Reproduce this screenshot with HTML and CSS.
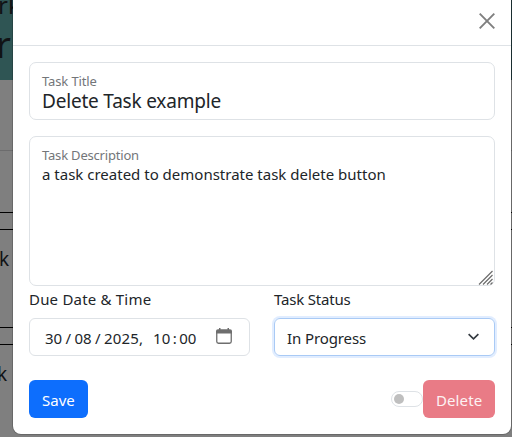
FILE: index.html
```html
<!DOCTYPE html>
<html lang="en">
<head>
<meta charset="utf-8">
<title>Edit task</title>
<link rel="stylesheet" href="styles.css">
</head>
<body>
<div class="page">
  <header class="hero"><span class="hero-sub">rk</span><span class="hero-title">r</span></header>
  <div class="toolbar"></div>
  <div class="gap"></div>
  <div class="task"></div>
  <div class="task task-row">k</div>
  <div class="task"></div>
  <div class="task-last">k</div>
</div>
<main class="modal">
  <div class="modal-header">
    <svg class="close" viewBox="0 0 16 16"><path d="M.7.7l14.6 14.6M15.3.7L.7 15.3"/></svg>
  </div>
  <form class="modal-body">
    <div class="field title-field">
      <span class="caption cap-title">Task Title</span>
      <span class="title-value">Delete Task example</span>
    </div>
    <div class="field desc-field">
      <span class="caption cap-desc">Task Description</span>
      <span class="desc-value">a task created to demonstrate task delete button</span>
      <svg class="grip" viewBox="0 0 15 15"><path d="M1 14.500L14.500 1M5 14.500L14.500 5M9 14.500L14.500 9M12.500 14.500L14.500 12.500"/></svg>
    </div>
    <div class="columns">
      <div>
        <div class="label due-label">Due Date &amp; Time</div>
        <div class="control date">
          <span class="num">30</span><span class="slash">/</span><span class="num">08</span><span class="slash">/</span><span class="year">2025</span><span class="comma">,</span><span class="num">10</span><span class="colon">:</span><span class="num">00</span>
          <svg class="calendar" viewBox="0 0 16 16"><path class="cal-box" d="M.75 4.500V13.500Q.75 15.250 2.500 15.250H13.500Q15.250 15.250 15.250 13.500V4.500"/><path class="cal-top" d="M0 5.500V3Q0 1.300 2 1.300H3V0H4.500V1.300H11.500V0H13V1.300H14Q16 1.300 16 3V5.500Z"/></svg>
        </div>
      </div>
      <div>
        <div class="label status-label">Task Status</div>
        <div class="control select"><span>In Progress</span><svg class="chevron" viewBox="0 0 16 16"><path d="m2 5 6 6 6-6"/></svg></div>
      </div>
    </div>
    <div class="actions">
      <div class="btn save"><span>Save</span></div>
      <div class="switch"><i></i></div>
      <div class="btn delete"><span>Delete</span></div>
    </div>
  </form>
</main>
</body>
</html>
```
FILE: styles.css
```css
* { box-sizing: border-box; }
body { margin: 0; width: 512px; height: 437px; overflow: hidden; position: relative; background: #7f7f7f; color: #212529; font: 16px/24px "Noto Sans", "Open Sans", sans-serif; }
.page { height: 437px; overflow: hidden; color: #111315; }
.hero { height: 80px; background: linear-gradient(90deg, #2f5554 90%, #1f373a); overflow: hidden; }
.hero span { display: block; }
.hero-sub { font-size: 24px; line-height: 24px; margin: -7px 0 0 -2px; }
.hero-title { font-size: 36px; line-height: 44px; margin: 6px 0 0 -4px; }
.toolbar { height: 71px; border-bottom: 1px solid #6c6c6d; }
.gap { height: 61px; }
.task { height: 18px; border-top: 1px solid #000; border-bottom: 1px solid #000; }
.task-row { height: 97px; border: 0; padding-top: 17px; font-size: 19px; margin-left: -1px; }
.task-last { padding-top: 17px; font-size: 19px; margin-left: -3px; }
.modal { position: absolute; left: 13px; top: 0; width: 498px; height: 434px; background: #fff; border-radius: 0 0 8px 8px; box-shadow: 0 0 0 1px rgba(0, 0, 0, .18); }
.modal-header { height: 46px; border-bottom: 1px solid #dee2e6; padding: 13px 16px 0 0; display: flex; justify-content: flex-end; }
.close { width: 16px; height: 16px; fill: none; stroke: #7f7f7f; stroke-width: 1.9; }
.modal-body { padding: 16px; margin: 0; white-space: nowrap; }
.field { border: 1px solid #dee2e6; border-radius: 7px; padding-left: 12px; position: relative; }
.field span { display: block; }
.title-field { height: 58px; padding-top: 9px; }
.caption { font-size: 13px; line-height: 18px; color: #737679; }
.cap-title { letter-spacing: -.12px; }
.cap-desc { letter-spacing: -.19px; }
.title-value { font-size: 19px; line-height: 22px; letter-spacing: -.2px; }
.desc-field { height: 150px; margin-top: 16px; padding-top: 9px; }
.desc-value { font-size: 15px; line-height: 20px; }
.grip { position: absolute; right: 1px; bottom: 0; width: 15px; height: 15px; fill: none; stroke: #6d6d6d; stroke-width: 1.2; }
.columns { display: grid; grid-template-columns: 221px 221px; column-gap: 24px; }
.label { font-size: 15px; height: 32px; line-height: 26px; }
.due-label { letter-spacing: .2px; }
.status-label { letter-spacing: -.18px; }
.control { height: 38px; border: 1px solid #dee2e6; border-radius: 6px; display: flex; align-items: center; font-size: 15px; padding-top: 1px; }
.date { padding-left: 15px; }
.year { letter-spacing: .2px; }
.slash { width: 12.3px; text-align: center; }
.comma { width: 14px; }
.colon { width: 9px; text-align: center; }
.calendar { width: 16px; height: 16px; margin: -4px 0 0 19.500px; }
.cal-box { fill: none; stroke: #6e6e6e; stroke-width: 1.3; }
.cal-top { fill: #6e6e6e; }
.select { border-color: #a9caf5; box-shadow: 0 0 0 2px #e1edff; padding-left: 12px; padding-right: 14px; justify-content: space-between; }
.select span { letter-spacing: -.1px; }
.chevron { width: 13px; height: 13px; margin-top: -2px; fill: none; stroke: #343a40; stroke-width: 2; }
.actions { display: flex; align-items: center; margin-top: 24px; }
.btn { height: 38px; border-radius: 6px; color: #fff; display: flex; align-items: center; padding: 2px 0 0 13px; font-size: 15px; }
.save { width: 59px; background: #0d6efd; }
.delete { width: 72px; background: #e97b86; }
.delete span { color: #fdf2f3; letter-spacing: .1px; }
.switch { width: 32px; height: 16px; border: 1px solid #dee2e6; border-radius: 8px; margin-left: auto; padding: 2px; }
.switch i { display: block; width: 10px; height: 10px; border-radius: 50%; background: #bfbfbf; }
```
